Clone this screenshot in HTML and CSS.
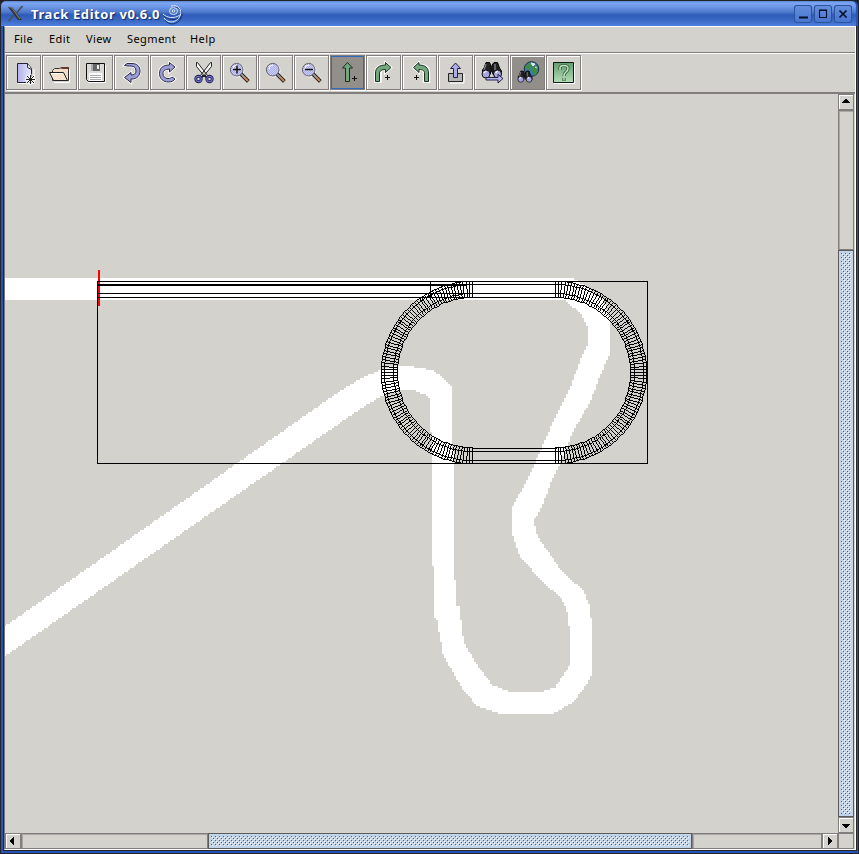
FILE: index.html
```
<!DOCTYPE html>
<html lang="en">
<head>
<meta charset="utf-8">
<title>Track Editor v0.6.0</title>
<link rel="stylesheet" href="styles.css">
</head>
<body>
<svg class="defs" width="0" height="0">
  <defs>
    <pattern id="dither" width="2" height="2" patternUnits="userSpaceOnUse"><rect width="2" height="2" fill="#ccf"/><path d="M0 0h1v1H0zM1 1h1v1H1z" fill="#a9b0dc"/></pattern>
    <linearGradient id="page"><stop offset="0" stop-color="#b2b2ea"/><stop offset="1" stop-color="#e6e8fa"/></linearGradient>
    <linearGradient id="green" x2="0" y2="1"><stop offset="0" stop-color="#639c71"/><stop offset="1" stop-color="#b4dcb8"/></linearGradient>
    <g id="lens">
      <circle cx="9.5" cy="9.5" r="6.5" fill="none" stroke="#fff"/>
      <path d="M14 14l7 6.5" stroke="#fff" stroke-width="5"/>
      <path d="M13 13l7.5 7.5" stroke="#222" stroke-width="4"/>
      <path d="M13 13l3.5 3.5" stroke="#999" stroke-width="2"/>
      <path d="M16 16l4 4" stroke="#c98459" stroke-width="2.2"/>
      <circle cx="8.7" cy="8.7" r="6.3" fill="url(#dither)" stroke="#60606c"/>
      <path d="M5 8a4 4 0 0 1 4-4" fill="none" stroke="#fff"/>
    </g>
    <g id="glasses">
      <path d="M6 1.5h3.5l1 2v9.5h-8V9L4 7zM14 1.5h3.5l2 5.500 2 3v4h-8l-1.500-3V4z" fill="#222" stroke="#000"/>
      <path d="M6 3L4 9M15 3v6" stroke="#77777f" stroke-width="1.500"/>
      <path d="M9.500 5h4v6h-4z" fill="#181818"/>
      <circle cx="6" cy="13" r="4" fill="#a5a5e0" stroke="#111"/>
      <circle cx="17.500" cy="13" r="4" fill="#a5a5e0" stroke="#111"/>
      <path d="M4 12l2-2M15.500 12l2-2" stroke="#eef" stroke-width="1.500"/>
    </g>
  </defs>
</svg>
<div class="window">
  <header class="titlebar">
    <svg class="xlogo" width="17" height="17" viewBox="0 0 17 17"><path d="M1 2h4l10 13h-4z" fill="#34343a"/><path d="M15.500 1L9.500 8M7 10l-5.500 6" stroke="#4e5054" stroke-width="1.800"/><path d="M2 2h2l9 12" fill="none" stroke="#858580"/></svg>
    <h1 class="title">Track Editor v0.6.0</h1>
    <svg class="swirl" width="22" height="20" viewBox="0 0 22 20" fill="none"><g transform="translate(1 1)" stroke="#153777"><path d="M9 2c7-3 12 4 9 10-3 7-12 8-16 2M1 10c4 4 11 5 17 1"/></g><g stroke="#dbe5f5"><path d="M9 1c7-2 12 4 9 10-3 7-12 8-16 2M1 9c4 4 11 5 17 1"/><ellipse cx="11.500" cy="6" rx="4" ry="3.500"/><circle cx="11.500" cy="6" r="1.300"/></g></svg>
    <div class="wbuttons">
      <span class="wbtn"><svg width="18" height="18"><path d="M5 12.500h9" stroke="#000d2c" stroke-width="2"/></svg></span>
      <span class="wbtn"><svg width="18" height="18"><path d="M5.500 5.500h7v7h-7zM5 5h8" fill="none" stroke="#000d2c" stroke-width="1.100"/></svg></span>
      <span class="wbtn"><svg width="18" height="18"><path d="M5.500 5.500l7 7m0-7l-7 7" stroke="#000d2c" stroke-width="1.700"/></svg></span>
    </div>
  </header>
  <div class="client">
    <nav class="menu"><span class="m1">File</span><span class="m2">Edit</span><span class="m3">View</span><span class="m4">Segment</span><span class="m5">Help</span></nav>
    <div class="toolbar">
      <div class="tool"><svg viewBox="0 0 24 24"><path d="M6 22.500h16V8" fill="none" stroke="#fff"/><path d="M5.500 2.500h10l4 5v14h-14z" fill="url(#page)" stroke="#222238"/><path d="M15.500 2.500v4l4 2" fill="#fff" stroke="#222238"/><path d="M18.500 13v11M13 18.500h11M14.500 14.500l8 8m0-8l-8 8" stroke="#fff" stroke-width="2"/><path d="M18.500 14v9M14 18.500h9M15 15l7 7m0-7l-7 7" stroke="#222"/></svg></div>
      <div class="tool"><svg viewBox="0 0 24 24"><path d="M6 21.500h15.500V8" fill="none" stroke="#fff"/><path d="M4.500 9.500l2-2h5l2-1h7v13h-16z" fill="#f3ddc8" stroke="#333"/><path d="M14 6h7v2h-8z" fill="#66382e"/><path d="M1.500 11.500h14l4 8h-14z" fill="#f7e4d0" stroke="#222"/><path d="M3 12.500h12" stroke="#fff"/></svg></div>
      <div class="tool"><svg viewBox="0 0 24 24"><path d="M4 21.500h17.500V4" fill="none" stroke="#fff"/><path d="M2.500 2.500h18v18h-16l-2-2z" fill="#dadada" stroke="#111"/><path d="M7 3h9v7H7z" fill="#aaa"/><path d="M9 3h7v7H9z" fill="#666"/><path d="M13 4h2v4h-2z" fill="#eee"/><path d="M5 12h13v8H5z" fill="#fff"/><path d="M6 14.500h11M6 16.500h11M6 18.500h11" stroke="#aaa"/></svg></div>
      <div class="tool"><svg viewBox="0 0 24 24"><path d="M4.500 4.500L7 2.500h5c5 0 8 3 8 7.500s-3 8-8 8h-1v3.500l-6.500-5 6.500-5V14c3 0 5-1 5-4s-2-5-5-5H8z" fill="#9d9dd7" stroke="#fff" stroke-width="2.500"/><path d="M4.500 4.500L7 2.500h5c5 0 8 3 8 7.500s-3 8-8 8h-1v3.500l-6.500-5 6.500-5V14c3 0 5-1 5-4s-2-5-5-5H8z" fill="#9d9dd7" stroke="#292942"/></svg></div>
      <div class="tool"><svg viewBox="0 0 24 24"><path d="M19 6L13.500 1.500V4C7 4 3.500 7 3.500 12.500s4 8.500 9 8.500c3 0 5-1 6.500-3l-3-2c-1 1-2 1.500-4 1.500-3 0-5-2-5-5S9 8.500 13.500 8v3z" fill="#9d9dd7" stroke="#fff" stroke-width="2.500"/><path d="M19 6L13.500 1.500V4C7 4 3.500 7 3.500 12.500s4 8.500 9 8.500c3 0 5-1 6.500-3l-3-2c-1 1-2 1.500-4 1.500-3 0-5-2-5-5S9 8.500 13.500 8v3z" fill="#9d9dd7" stroke="#292942"/></svg></div>
      <div class="tool"><svg viewBox="0 0 24 24"><path d="M4.500 1.500v4l9 11 2-2-10-13zM19.500 1.500v4l-9 11-2-2 10-13z" fill="#f6f6f6" stroke="#222"/><circle cx="6.500" cy="18" r="2.700" fill="#ddd" stroke="#222250" stroke-width="3"/><circle cx="17.500" cy="18" r="2.700" fill="#ddd" stroke="#222250" stroke-width="3"/><circle cx="6.500" cy="18" r="2.700" fill="none" stroke="#6666bd" stroke-width="1.300"/><circle cx="17.500" cy="18" r="2.700" fill="none" stroke="#6666bd" stroke-width="1.300"/><path d="M10 15h4" stroke="#222" stroke-width="2"/></svg></div>
      <div class="tool"><svg viewBox="0 0 24 24"><use href="#lens"/><path d="M5 8.500h8M9 4.500v8" stroke="#111" stroke-width="1.500"/></svg></div>
      <div class="tool"><svg viewBox="0 0 24 24"><use href="#lens"/></svg></div>
      <div class="tool"><svg viewBox="0 0 24 24"><use href="#lens"/><path d="M5 8.500h8" stroke="#111" stroke-width="1.500"/></svg></div>
      <div class="tool on sel"><svg viewBox="0 0 24 24"><path d="M11.500 1.500l5 5.500h-3v13.500h-4V7h-3z" fill="#75a77e" stroke="#18301c"/><path d="M16 17.500h5M18.500 15v5" stroke="#111"/></svg></div>
      <div class="tool"><svg viewBox="0 0 24 24"><path d="M19 6.500L13.500 1.500V4C7 4 3.500 7 3.500 12v8.500h5V12c0-2 2-3.500 5-3.500v3z" fill="#75a77e" stroke="#fff" stroke-width="2.500"/><path d="M19 6.500L13.500 1.500V4C7 4 3.500 7 3.500 12v8.500h4V12c0-2 2-3.500 6-3.500v3z" fill="#75a77e" stroke="#18301c"/><path d="M13 16.500h5M15.500 14v5" stroke="#111"/></svg></div>
      <div class="tool"><svg viewBox="0 0 24 24"><path d="M5.500 6.500l5.500-5V4c6.500 0 10 3 10 8v8.500h-5V12c0-2-1-3.500-5-3.500v3z" fill="#75a77e" stroke="#fff" stroke-width="2.500"/><path d="M5.500 6.500l5.500-5V4c6.500 0 9.500 3 9.500 8v8.500h-4V12c0-2-1.500-3.500-5.500-3.500v3z" fill="#75a77e" stroke="#18301c"/><path d="M6 16.500h5M8.500 14v5" stroke="#111"/></svg></div>
      <div class="tool"><svg viewBox="0 0 24 24"><path d="M6 22h14V13" fill="none" stroke="#fff"/><path d="M4.500 12.500h14v8h-14z" fill="#b5b5b5" stroke="#222"/><path d="M11.500 2l5 5.500h-3v9h-4v-9h-3z" fill="#adade5" stroke="#222240"/></svg></div>
      <div class="tool"><svg viewBox="0 0 24 24"><use href="#glasses"/><path d="M6 16.500h12v-3l5 4-5 4.500v-3H6z" fill="#b5b5ee" stroke="#222240"/></svg></div>
      <div class="tool on"><svg viewBox="0 0 24 24"><circle cx="15.500" cy="8" r="7.300" fill="#387bb3" stroke="#163044"/><path d="M9 6q4-6 8-4l-1 3-4 5zM16 6l5-2 1 6-3 5-3-4z" fill="#3e8b4a"/><path d="M15 2l4 1-2 2zM19 6l2 1" fill="#ddebf5" stroke="#ddebf5"/><g transform="translate(.5 9) scale(.72)"><use href="#glasses"/></g></svg></div>
      <div class="tool"><svg viewBox="0 0 24 24"><path d="M2 22.500h20.500V3" fill="none" stroke="#fff"/><path d="M1.500 1.500h20v20h-20z" fill="url(#green)" stroke="#101c12"/><path d="M8 9V7q0-2.500 4-2.500t4 3q0 2-2 3.500t-2 4M12 17v3" fill="none" stroke="#315e3a" stroke-width="3.200"/><path d="M8 9V7q0-2.500 4-2.500t4 3q0 2-2 3.500t-2 4M12 17v2.500" fill="none" stroke="#c3e3c3" stroke-width="1.500"/></svg></div>
    </div>
    <main class="view">
      <canvas id="track" width="833" height="739"></canvas>
      <div class="bar vertical">
        <span class="arrow"><svg width="16" height="16" shape-rendering="crispEdges"><path d="M7 5h2v1h1v1h1v1h1v1H4V8h1V7h1V6h1z"/></svg></span>
        <span class="gap vgap"></span><span class="thumb"></span>
        <span class="arrow"><svg width="16" height="16" shape-rendering="crispEdges"><path d="M4 7h8v1h-1v1h-1v1H9v1H7v-1H6V9H5V8H4z"/></svg></span>
      </div>
      <div class="bar horizontal">
        <span class="arrow"><svg width="16" height="16" shape-rendering="crispEdges"><path d="M9 4v8H8v-1H7v-1H6V9H5V7h1V6h1V5h1V4z"/></svg></span>
        <span class="gap hgap"></span><span class="thumb hthumb"></span><span class="gap rest"></span>
        <span class="arrow"><svg width="16" height="16" shape-rendering="crispEdges"><path d="M6 4v8h1v-1h1v-1h1V9h1V7H9V6H8V5H7V4z"/></svg></span>
      </div>
      <div class="corner"></div>
    </main>
  </div>
</div>
<script src="track.js"></script>
</body>
</html>
```
FILE: styles.css
```
* { box-sizing: border-box; }
body { margin: 0; background: #222; overflow: hidden; }
.defs { display: block; position: absolute; }
svg { display: block; flex: none; }
.window {
  width: 859px; height: 854px; display: flex; flex-direction: column;
  padding: 0 2px 3px 1px; background: #2853b6; border: 1px solid #20242c; border-width: 1px 1px 1px 0;
  border-radius: 6px 6px 0 0;
  box-shadow: inset 1px 0 #20242c;
}
.titlebar {
  height: 25px; flex: none; display: flex; align-items: center; padding: 0 4px 0 6px;
  background: linear-gradient(#5c83cc 0, #7ea6f2 2px, #6b95e6 6px, #4f79ca 11px, #2e5bb9 14px, #3a68c4 19px, #4e7fdb 25px);
  border-radius: 5px 5px 0 0;
}
.title {
  margin: 0 0 0 7px; width: 130px; color: #fff; font: bold 13px "Noto Sans", sans-serif;
  letter-spacing: 0.6px; white-space: nowrap; text-shadow: 1px 1px 1px #102b6a; padding-top: 1px;
}
.swirl { margin: 2px 0 0 1px; }
.wbuttons { margin-left: auto; display: flex; gap: 2px; padding-top: 1px; }
.wbtn { width: 18px; height: 18px; border-radius: 3px; background: linear-gradient(#6690de, #4675cc); box-shadow: inset 0 0 0 1px #2c539e; }
.client {
  flex: 1; min-height: 0; display: flex; flex-direction: column; margin-left: 3px;
  border: 1px solid #fff; border-left-color: #777; background: #d4d2cd;
  outline: 1px solid #25272d; clip-path: inset(0 -1px -1px -1px);
}
.menu {
  height: 27px; flex: none; border-bottom: 1px solid #fff; box-shadow: inset 0 -1px #827e7e;
  font: 11px/23px "Noto Sans", sans-serif; letter-spacing: 0.4px; color: #000; display: flex; padding-left: 9px;
}
.m1 { width: 35px; } .m2 { width: 37px; } .m3 { width: 41px; } .m4 { width: 63px; }
.toolbar { height: 40px; flex: none; display: flex; gap: 1px; padding: 1px 0 0 1px; border-bottom: 2px solid #827e7e; }
.tool { width: 35px; height: 35px; border: 1px solid #827e7e; box-shadow: inset 1px 1px #fff, 1px 1px #fff; padding: 5px; }
.tool svg { width: 24px; height: 24px; }
.on { background: #928e89; }
.sel { box-shadow: inset 0 0 0 1px #3468bd, 1px 1px #fff; }
.view { flex: 1; min-height: 0; display: grid; grid-template-columns: 833px 16px; grid-template-rows: 739px 16px; }
.view canvas { display: block; }
.bar { display: flex; }
.vertical { flex-direction: column; }
.arrow { width: 16px; height: 16px; flex: none; background: #d4d2cd; border: 1px solid #827e7e; box-shadow: inset 1px 1px #fff; }
.arrow svg { margin: -1px; }
.gap { border: 1px solid #827e7e; box-shadow: inset 1px 1px #aaa8a4; }
.vgap { height: 140px; }
.thumb {
  flex: 1; border: 1px solid #5c5a5a; box-shadow: inset 1px 1px #fff; padding: 2px;
  background-color: #c1d4ea; background-clip: content-box;
  background-image: radial-gradient(circle at 1.5px 1.5px, #4c607c 0 .6px, transparent .7px), radial-gradient(circle at .5px .5px, #fff 0 .6px, transparent .7px), radial-gradient(circle at 3.5px 3.5px, #4c607c 0 .6px, transparent .7px), radial-gradient(circle at 2.5px 2.5px, #fff 0 .6px, transparent .7px);
  background-size: 4px 4px; background-position: 3px 3px;
  outline: 2px solid #c1d4ea; outline-offset: -3px;
}
.hgap { width: 187px; }
.hthumb { flex: none; width: 484px; }
.rest { flex: 1; }
.corner { border: solid #827e7e; border-width: 1px; }
```
FILE: track.js
```
const ctx = document.getElementById('track').getContext('2d');
const OX = 5, OY = 94;

// Background road bitmap, drawn at two screen pixels per cell.
const road = [
  4,278, 573,278, 577,281, 588,288, 603,299, 610,318, 610,353, 600,376, 590,402, 573,432, 560,463, 553,477,
  542,507, 534,520, 536,533, 542,543, 563,573, 583,590, 589,605, 592,625, 592,675, 583,690, 573,702, 560,710,
  552,714, 500,714, 477,706, 462,688, 443,655, 440,637, 437,620, 434,618, 434,566, 432,566, 432,463, 430,400,
  425,395, 415,391, 400,390, 385,394, 360,409, 4,657, 4,627, 340,391, 360,379, 380,370, 398,366, 413,367,
  433,370, 443,378, 452,388, 452,437, 454,463, 454,555, 456,605, 460,607, 462,633, 465,645, 477,665, 492,685,
  510,692, 542,692, 555,687, 570,665, 570,632, 567,612, 562,599, 543,582, 520,557, 514,540, 512,533, 512,508,
  520,493, 532,470, 553,422, 572,383, 582,356, 588,343, 588,328, 582,315, 565,300, 4,300
];
ctx.fillStyle = '#fff';
for (let y = 278; y < 716; y += 2) {
  const cuts = [];
  for (let i = 0; i < road.length; i += 2) {
    const x1 = road[i], y1 = road[i + 1], j = (i + 2) % road.length, x2 = road[j], y2 = road[j + 1];
    const c = y + 1;
    if ((y1 <= c) !== (y2 <= c)) cuts.push(x1 + (c - y1) * (x2 - x1) / (y2 - y1));
  }
  cuts.sort((a, b) => a - b);
  for (let i = 0; i + 1 < cuts.length; i += 2) {
    const a = Math.round(cuts[i] / 2) * 2, b = Math.round(cuts[i + 1] / 2) * 2;
    ctx.fillRect(a - OX, y - OY, b - a, 2);
  }
}

// Hard-edged one pixel line.
function line(x0, y0, x1, y1) {
  ctx.fillStyle = '#000';
  x0 = Math.round(x0); y0 = Math.round(y0); x1 = Math.round(x1); y1 = Math.round(y1);
  const n = Math.max(Math.abs(x1 - x0), Math.abs(y1 - y0)) || 1;
  for (let i = 0; i <= n; i++) {
    ctx.fillRect(Math.round(x0 + (x1 - x0) * i / n) - OX, Math.round(y0 + (y1 - y0) * i / n) - OY, 1, 1);
  }
}
function box(a, b, c, d) { line(a, b, c, b); line(c, b, c, d); line(a, d, c, d); line(a, b, a, d); }

box(97, 281, 647, 463);

ctx.fillStyle = '#f00';
ctx.fillRect(98 - OX, 270 - OY, 2, 36);

line(98, 281, 556, 281);
for (const y of [284, 285, 293, 297]) line(98, y, y === 285 ? 466 : 556, y);
line(430, 281, 430, 297);
for (const y of [448, 451, 460]) line(472, y, 556, y);

const radii = [91, 88, 79, 75];
function bend(cx, cy, dir) {
  const n = 90;
  for (let i = 0; i <= n; i++) {
    const a = Math.PI * i / n, s = dir * Math.sin(a), c = -Math.cos(a);
    line(cx + 91 * s, cy + 91 * c, cx + 75 * s, cy + 75 * c);
    if (i < n) {
      const b = Math.PI * (i + 1) / n, s2 = dir * Math.sin(b), c2 = -Math.cos(b);
      for (const r of radii) line(cx + r * s, cy + r * c, cx + r * s2, cy + r * c2);
    }
  }
}
bend(472, 372, -1);
bend(555, 372, 1);
```
